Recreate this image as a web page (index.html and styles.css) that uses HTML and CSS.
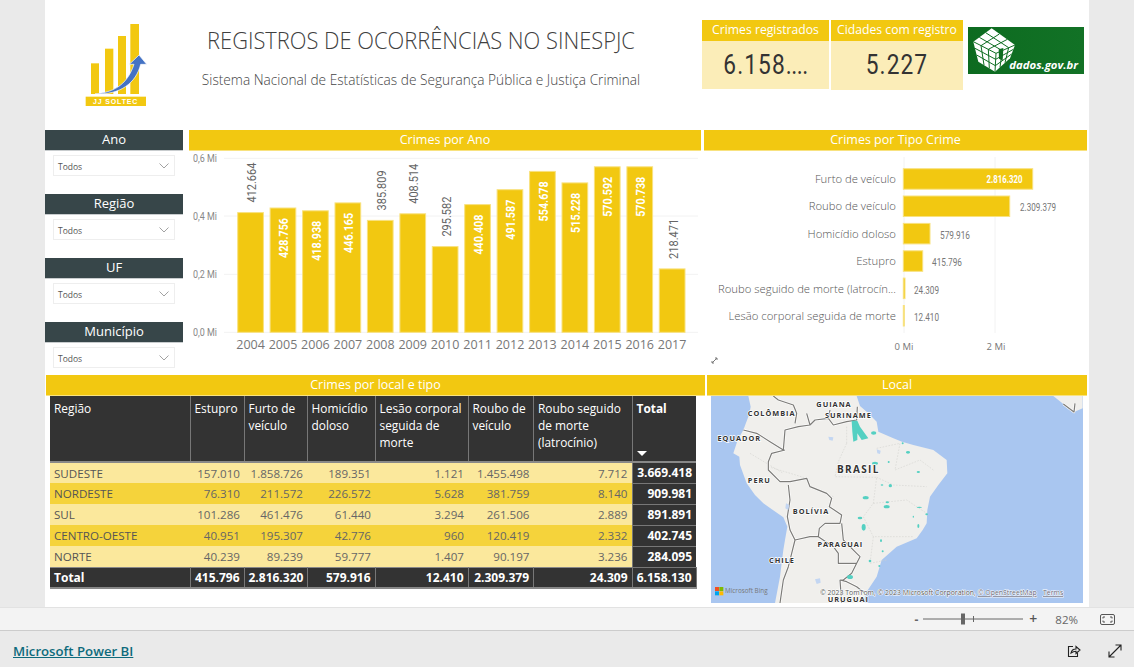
FILE: index.html
```html
<!DOCTYPE html>
<html lang="pt-BR">
<head>
<meta charset="utf-8">
<title>Registros de Ocorrências no SINESPJC</title>
<link rel="stylesheet" href="styles.css">
</head>
<body>
<main class="report">
  <header class="top">
    <svg class="logo" viewBox="0 0 270 300" aria-label="JJ Soltec">
      <rect class="lg-bar" x="63" y="145" width="24" height="92"/>
      <rect class="lg-bar" x="105" y="101" width="25" height="136"/>
      <rect class="lg-bar" x="144" y="63" width="24" height="174"/>
      <rect class="lg-bar" x="181" y="27" width="26" height="210"/>
      <path class="lg-arrow" d="M75 237C125 232 170 215 192 148H178L207 120L230 148H212C198 205 150 240 75 237Z"/>
      <rect class="lg-bar" x="47" y="245" width="181" height="28"/>
      <text class="lg-text" x="137" y="266">JJ SOLTEC</text>
    </svg>
    <div class="titles">
      <h1 class="title">REGISTROS DE OCORRÊNCIAS NO SINESPJC</h1>
      <p class="subtitle">Sistema Nacional de Estatísticas de Segurança Pública e Justiça Criminal</p>
    </div>
    <section class="kpi kpi-a">
      <h2 class="kpi-head">Crimes registrados</h2>
      <div class="kpi-value">6.158<span class="dots">....</span></div>
    </section>
    <section class="kpi kpi-b">
      <h2 class="kpi-head">Cidades com registro</h2>
      <div class="kpi-value">5.227</div>
    </section>
    <svg class="dados" viewBox="24 21 348 141" aria-label="dados.gov.br">
      <defs>
        <linearGradient id="dg" x1="0" y1="0" x2="1" y2="0">
          <stop offset="0" stop-color="#0d6b20"/><stop offset="1" stop-color="#127226"/>
        </linearGradient>
      </defs>
      <rect x="24" y="21" width="348" height="141" fill="url(#dg)"/>
      <polygon class="cube" points="95,25 165,75 150,115 105,155 55,125 40,65"/>
      <path class="cube-line" d="M118 42L63 77M142 58L85 88M77 38L146 83M58 52L127 92M63 77L72 135M85 88L88 145M45 85L107 118M50 105L106 137M40 65L108 100L165 75M108 100L105 155M127 92L120 142M146 83L135 128M107 118L160 88M106 137L155 102"/>
      <polygon class="cube-notch" points="116,88 130,84 128,122 117,116"/>
      <text class="dados-text" x="148" y="146">dados.gov.br</text>
    </svg>
  </header>

  <div class="middle">
    <aside class="slicers">
      <div class="slicer"><h3 class="slicer-head">Ano</h3><div class="select"><span>Todos</span><svg class="chev" viewBox="0 0 10 6"><path d="M.5.5L5 5L9.5.5"/></svg></div></div>
      <div class="slicer"><h3 class="slicer-head">Região</h3><div class="select"><span>Todos</span><svg class="chev" viewBox="0 0 10 6"><path d="M.5.5L5 5L9.5.5"/></svg></div></div>
      <div class="slicer"><h3 class="slicer-head">UF</h3><div class="select"><span>Todos</span><svg class="chev" viewBox="0 0 10 6"><path d="M.5.5L5 5L9.5.5"/></svg></div></div>
      <div class="slicer"><h3 class="slicer-head">Município</h3><div class="select"><span>Todos</span><svg class="chev" viewBox="0 0 10 6"><path d="M.5.5L5 5L9.5.5"/></svg></div></div>
    </aside>

    <section class="panel panel-year">
      <h2 class="bar-title">Crimes por Ano</h2>
      <svg class="chart" viewBox="189 151 512 224">
        <path class="grid" d="M224 158.3H698M224 216H698M224 274.3H698M224 332.3H698"/>
        <text class="axis-y" x="193" y="162" textLength="24" lengthAdjust="spacingAndGlyphs">0,6 Mi</text>
        <text class="axis-y" x="193" y="220" textLength="24" lengthAdjust="spacingAndGlyphs">0,4 Mi</text>
        <text class="axis-y" x="193" y="278" textLength="24" lengthAdjust="spacingAndGlyphs">0,2 Mi</text>
        <text class="axis-y" x="193" y="336" textLength="24" lengthAdjust="spacingAndGlyphs">0,0 Mi</text>
        <g class="bars">
          <rect x="237.7" y="212.6" width="25.7" height="119.7"/>
          <rect x="270.1" y="208" width="25.7" height="124.3"/>
          <rect x="302.6" y="210.8" width="25.7" height="121.5"/>
          <rect x="335" y="202.9" width="25.7" height="129.4"/>
          <rect x="367.4" y="220.4" width="25.7" height="111.9"/>
          <rect x="399.9" y="213.8" width="25.7" height="118.5"/>
          <rect x="432.3" y="246.6" width="25.7" height="85.7"/>
          <rect x="464.7" y="204.6" width="25.7" height="127.7"/>
          <rect x="497.1" y="189.7" width="25.7" height="142.6"/>
          <rect x="529.6" y="171.4" width="25.7" height="160.9"/>
          <rect x="562" y="182.9" width="25.7" height="149.4"/>
          <rect x="594.4" y="166.8" width="25.7" height="165.5"/>
          <rect x="626.9" y="166.8" width="25.7" height="165.5"/>
          <rect x="659.3" y="268.9" width="25.7" height="63.4"/>
        </g>
        <g class="lbl-out">
          <text transform="translate(256 202.6) rotate(-90)" textLength="40" lengthAdjust="spacingAndGlyphs">412.664</text>
          <text transform="translate(385.7 210.4) rotate(-90)" textLength="40" lengthAdjust="spacingAndGlyphs">385.809</text>
          <text transform="translate(418.2 203.8) rotate(-90)" textLength="40" lengthAdjust="spacingAndGlyphs">408.514</text>
          <text transform="translate(450.6 236.6) rotate(-90)" textLength="40" lengthAdjust="spacingAndGlyphs">295.582</text>
          <text transform="translate(677.6 258.9) rotate(-90)" textLength="40" lengthAdjust="spacingAndGlyphs">218.471</text>
        </g>
        <g class="lbl-in">
          <text transform="translate(288 218) rotate(-90)" textLength="40" lengthAdjust="spacingAndGlyphs">428.756</text>
          <text transform="translate(320.5 220.8) rotate(-90)" textLength="40" lengthAdjust="spacingAndGlyphs">418.938</text>
          <text transform="translate(353 212.9) rotate(-90)" textLength="40" lengthAdjust="spacingAndGlyphs">446.165</text>
          <text transform="translate(482.6 214.6) rotate(-90)" textLength="40" lengthAdjust="spacingAndGlyphs">440.408</text>
          <text transform="translate(515 199.7) rotate(-90)" textLength="40" lengthAdjust="spacingAndGlyphs">491.587</text>
          <text transform="translate(547.5 181.4) rotate(-90)" textLength="40" lengthAdjust="spacingAndGlyphs">554.678</text>
          <text transform="translate(580 192.9) rotate(-90)" textLength="40" lengthAdjust="spacingAndGlyphs">515.228</text>
          <text transform="translate(612.3 176.8) rotate(-90)" textLength="40" lengthAdjust="spacingAndGlyphs">570.592</text>
          <text transform="translate(644.8 176.8) rotate(-90)" textLength="40" lengthAdjust="spacingAndGlyphs">570.738</text>
        </g>
        <g class="axis-x">
          <text x="250.6" y="349">2004</text><text x="283" y="349">2005</text><text x="315.4" y="349">2006</text><text x="347.9" y="349">2007</text><text x="380.3" y="349">2008</text><text x="412.7" y="349">2009</text><text x="445.1" y="349">2010</text><text x="477.6" y="349">2011</text><text x="510" y="349">2012</text><text x="542.4" y="349">2013</text><text x="574.9" y="349">2014</text><text x="607.3" y="349">2015</text><text x="639.7" y="349">2016</text><text x="672.1" y="349">2017</text>
        </g>
      </svg>
    </section>

    <section class="panel panel-type">
      <h2 class="bar-title">Crimes por Tipo Crime</h2>
      <svg class="chart" viewBox="704 151 383 224">
        <path class="grid" d="M904 157V333M995 157V333"/>
        <g class="bars">
          <rect x="903.3" y="168.7" width="129.4" height="20.5"/>
          <rect x="903.3" y="196" width="106.4" height="20.5"/>
          <rect x="903.3" y="223.4" width="26.7" height="20.5"/>
          <rect x="903.3" y="250.8" width="19.4" height="20.5"/>
          <rect x="903.3" y="278.1" width="1.7" height="20.5"/>
          <rect x="903.3" y="305.5" width="1" height="20.5"/>
        </g>
        <g class="cat">
          <text x="896" y="183">Furto de veículo</text>
          <text x="896" y="210">Roubo de veículo</text>
          <text x="896" y="238">Homicídio doloso</text>
          <text x="896" y="265">Estupro</text>
          <text x="896" y="293">Roubo seguido de morte (latrocín...</text>
          <text x="896" y="320">Lesão corporal seguida de morte</text>
        </g>
        <text class="val val-in" x="986.5" y="183" textLength="36" lengthAdjust="spacingAndGlyphs">2.816.320</text>
        <g class="val">
          <text x="1020" y="210.5" textLength="36" lengthAdjust="spacingAndGlyphs">2.309.379</text>
          <text x="940" y="238.5" textLength="30" lengthAdjust="spacingAndGlyphs">579.916</text>
          <text x="932" y="265.5" textLength="30" lengthAdjust="spacingAndGlyphs">415.796</text>
          <text x="914" y="293.5" textLength="25" lengthAdjust="spacingAndGlyphs">24.309</text>
          <text x="914" y="320.5" textLength="25" lengthAdjust="spacingAndGlyphs">12.410</text>
        </g>
        <g class="axis-h">
          <text x="904" y="349.5">0 Mi</text>
          <text x="996" y="349.5">2 Mi</text>
        </g>
        <path class="resize" d="M712.5 362.5L716.5 358.5M712 361V363H714M715 358H717V360"/>
      </svg>
    </section>
  </div>

  <div class="bottom">
    <section class="panel panel-table">
      <h2 class="bar-title">Crimes por local e tipo</h2>
      <table class="matrix">
        <colgroup>
          <col class="c1"><col class="c2"><col class="c3"><col class="c4"><col class="c5"><col class="c6"><col class="c7"><col class="c8">
        </colgroup>
        <thead>
          <tr>
            <th>Região</th><th>Estupro</th><th>Furto de veículo</th><th>Homicídio doloso</th><th>Lesão corporal seguida de morte</th><th>Roubo de veículo</th><th>Roubo seguido de morte (latrocínio)</th><th class="th-total">Total<span class="sort"></span></th>
          </tr>
        </thead>
        <tbody>
          <tr><td>SUDESTE</td><td>157.010</td><td>1.858.726</td><td>189.351</td><td>1.121</td><td>1.455.498</td><td>7.712</td><td>3.669.418</td></tr>
          <tr><td>NORDESTE</td><td>76.310</td><td>211.572</td><td>226.572</td><td>5.628</td><td>381.759</td><td>8.140</td><td>909.981</td></tr>
          <tr><td>SUL</td><td>101.286</td><td>461.476</td><td>61.440</td><td>3.294</td><td>261.506</td><td>2.889</td><td>891.891</td></tr>
          <tr><td>CENTRO-OESTE</td><td>40.951</td><td>195.307</td><td>42.776</td><td>960</td><td>120.419</td><td>2.332</td><td>402.745</td></tr>
          <tr><td>NORTE</td><td>40.239</td><td>89.239</td><td>59.777</td><td>1.407</td><td>90.197</td><td>3.236</td><td>284.095</td></tr>
        </tbody>
        <tfoot>
          <tr><td>Total</td><td>415.796</td><td>2.816.320</td><td>579.916</td><td>12.410</td><td>2.309.379</td><td>24.309</td><td>6.158.130</td></tr>
        </tfoot>
      </table>
    </section>

    <section class="panel panel-map">
      <h2 class="bar-title">Local</h2>
      <svg class="map" viewBox="33 18 1116 621" aria-label="Mapa">
        <rect class="ocean" x="33" y="18" width="1116" height="621"/>
        <path class="land" d="M1060 18L1090 42L1122 66L1148 55V18Z"/>
        <path class="land" d="M145 18L152 50L148 72L130 120L113 150L100 190L118 200L120 225L140 280L165 315L190 340L250 382L262 410L255 450L250 480L245 520L240 560L225 639H490L500 605L530 560L545 510L590 470L650 445L668 420L680 400L682 360L690 320L715 285L742 250L740 210L700 180L640 165L606 155L580 145L535 125L530 95L505 70L480 48L470 18Z"/>
        <path class="state" d="M440 160L415 215L405 260L530 262L520 340L490 380M530 262L580 285L680 290M530 175L600 160L585 240L660 210L700 240M520 340L620 330L680 370M490 380L520 440L640 440M520 440L510 520L560 510M205 230L320 265M440 110L440 160M150 190L250 250M330 290L400 320"/>
        <path class="border-h" d="M220 18L235 30L280 45L290 70L285 100M130 120L170 130L210 155L250 180L255 120L295 110L330 105L345 90L385 85L400 105L440 95L470 90L472 50M330 105L320 70M385 85L390 60M255 180L215 190L205 215L205 240L240 275L270 275L320 265L330 290L380 310L395 325L388 350L425 375L420 400L375 400L358 415L355 440L400 470L415 490L415 520L470 520L480 500L470 490L430 450L425 400M265 285L270 330L262 380L270 420L285 450L330 440L355 440M285 450L275 490L265 530L250 570L240 639M470 520L455 550L430 570L420 570L425 639M420 570L440 575L470 590L495 610M1090 42L1122 66L1125 40"/>
        <path class="border" d="M220 18L235 30L280 45L290 70L285 100M130 120L170 130L210 155L250 180L255 120L295 110L330 105L345 90L385 85L400 105L440 95L470 90L472 50M330 105L320 70M385 85L390 60M255 180L215 190L205 215L205 240L240 275L270 275L320 265L330 290L380 310L395 325L388 350L425 375L420 400L375 400L358 415L355 440L400 470L415 490L415 520L470 520L480 500L470 490L430 450L425 400M265 285L270 330L262 380L270 420L285 450L330 440L355 440M285 450L275 490L265 530L250 570L240 639M470 520L455 550L430 570L420 570L425 639M420 570L440 575L470 590L495 610M1090 42L1122 66L1125 40"/>
        <g class="teal">
          <polygon points="455,92 472,92 480,110 505,145 485,150 472,130 472,150 460,155 457,125"/>
          <ellipse cx="521" cy="129" rx="8" ry="5"/><ellipse cx="525" cy="220" rx="9" ry="5"/><ellipse cx="624" cy="187" rx="6" ry="4"/>
          <ellipse cx="497" cy="323" rx="9" ry="5"/><ellipse cx="560" cy="350" rx="9" ry="5"/><ellipse cx="562" cy="337" rx="5" ry="3"/>
          <ellipse cx="571" cy="287" rx="5" ry="5"/><ellipse cx="546" cy="285" rx="4" ry="2"/><ellipse cx="480" cy="384" rx="7" ry="4"/>
          <ellipse cx="491" cy="412" rx="6" ry="10"/><ellipse cx="450" cy="561" rx="9" ry="6"/><ellipse cx="510" cy="513" rx="4" ry="4"/>
          <ellipse cx="655" cy="246" rx="5" ry="3"/><ellipse cx="680" cy="373" rx="4" ry="3"/><ellipse cx="658" cy="352" rx="8" ry="2"/>
          <ellipse cx="655" cy="408" rx="3" ry="6"/><ellipse cx="640" cy="380" rx="2" ry="3"/><ellipse cx="543" cy="452" rx="3" ry="4"/>
          <ellipse cx="608" cy="160" rx="3" ry="3"/><ellipse cx="566" cy="216" rx="3" ry="3"/><ellipse cx="548" cy="484" rx="3" ry="3"/><ellipse cx="538" cy="528" rx="3" ry="3"/>
        </g>
        <path class="lake" d="M385 140L400 142L398 152L388 150ZM530 178L542 182L540 192L532 190ZM345 568L360 565L362 578L350 582ZM258 340L268 345L265 360L256 355Z"/>
        <g class="place">
          <text x="402" y="50">GUIANA</text>
          <text x="215" y="79">COLÔMBIA</text>
          <text x="445" y="84">SURINAME</text>
          <text x="118" y="153">EQUADOR</text>
          <text x="178" y="279">PERU</text>
          <text x="333" y="372">BOLÍVIA</text>
          <text x="421" y="471">PARAGUAI</text>
          <text x="246" y="519">CHILE</text>
          <text x="445" y="637">URUGUAI</text>
          <text class="place-big" x="475" y="250">BRASIL</text>
        </g>
        <rect class="ms-r" x="45" y="591" width="12" height="12"/>
        <rect class="ms-g" x="58" y="591" width="12" height="12"/>
        <rect class="ms-b" x="45" y="604" width="12" height="12"/>
        <rect class="ms-y" x="58" y="604" width="12" height="12"/>
        <text class="bing" x="75" y="610">Microsoft Bing</text>
        <text class="copy" x="360" y="616">© 2023 TomTom, © 2023 Microsoft Corporation, <tspan class="copy-link">© OpenStreetMap</tspan></text>
        <text class="copy copy-link" x="1029" y="616">Terms</text>
      </svg>
    </section>
  </div>
</main>

<div class="zoombar">
  <span class="zb-minus">-</span>
  <svg class="slider" viewBox="0 0 100 12">
    <path class="sl-line" d="M0 6H100M50.5 3V9"/>
    <rect class="sl-thumb" x="38" y="0.5" width="4" height="11"/>
  </svg>
  <span class="zb-plus">+</span>
  <span class="zb-pct">82%</span>
  <svg class="fit" viewBox="0 0 15 11">
    <rect class="ic" x=".5" y=".5" width="14" height="10" rx="1.5"/>
    <path class="ic" d="M3 4.5V3H5M10 3H12V4.5M12 6.5V8H10M5 8H3V6.5"/>
  </svg>
</div>

<footer class="footbar">
  <a class="pbi" href="#">Microsoft Power BI</a>
  <div class="foot-icons">
    <svg class="fi" viewBox="0 0 14 14">
      <path class="ic-dark" d="M6 2.5H1.5V12.5H10.5V9"/>
      <path class="ic-dark" d="M4 9C4.5 6.5 6.5 5 9 5V2.5L13 6L9 9.5V7.2C7 7.2 5.5 7.8 4 9Z"/>
    </svg>
    <svg class="fi" viewBox="0 0 14 14">
      <path class="ic-dark" d="M1 13L13 1M7.5 1H13V6.5M1 7.5V13H6.5"/>
    </svg>
  </div>
</footer>
</body>
</html>
```
FILE: styles.css
```css
* { box-sizing: border-box; }
html, body { margin: 0; padding: 0; }
body {
  width: 1134px;
  height: 667px;
  overflow: hidden;
  background: #eaeaea;
  font-family: "Open Sans", "Noto Sans", sans-serif;
  color: #444;
}
h1, h2, h3, p { margin: 0; font-weight: 400; }

.report {
  width: 1044px;
  height: 607px;
  margin-left: 45px;
  background: #fff;
}

/* header */
.top { display: flex; align-items: flex-start; height: 130px; }
.logo { width: 90px; height: 100px; margin: 15px 0 0 25px; flex: none; }
.lg-bar { fill: #f2c811; }
.lg-arrow { fill: #4472c4; stroke: #fff; stroke-width: 2; }
.lg-text { fill: #fff; font: 700 21px "Liberation Sans", sans-serif; letter-spacing: 2.5px; text-anchor: middle; }
.titles { width: 464px; margin: 26px 49px 0 29px; flex: none; text-align: center; }
.title { font-size: 23.5px; font-weight: 300; color: #404040; line-height: 28px; white-space: nowrap; transform: scaleX(.93); }
.subtitle { margin-top: 17px; font-size: 14px; font-weight: 300; color: #444; line-height: 18px; white-space: nowrap; transform: scaleX(.977); }
.kpi { flex: none; margin-top: 20px; background: #fbedb8; }
.kpi-a { width: 127px; height: 69px; margin-right: 2px; }
.kpi-b { width: 132px; height: 70px; margin-right: 5px; }
.kpi-head { height: 21px; background: #f2c811; color: #fff; font-size: 12.2px; line-height: 20px; text-align: center; white-space: nowrap; }
.kpi-value { font-family: Roboto, sans-serif; font-size: 27px; letter-spacing: 1.3px; color: #333; text-align: center; line-height: 49px; transform: scaleX(.84); white-space: nowrap; }
.dots { letter-spacing: -.6px; }
.dados { width: 116px; height: 47px; margin-top: 27px; flex: none; }
.cube { fill: #fff; }
.cube-line { fill: none; stroke: #0f6e22; stroke-width: 3; }
.cube-notch { fill: #0f6e22; }
.dados-text { fill: #fff; font: italic 700 34px "Open Sans", sans-serif; }

/* middle */
.middle { display: flex; height: 245px; }
.slicers { width: 138px; margin-right: 6px; flex: none; display: flex; flex-direction: column; gap: 18px; }
.slicer { height: 46px; }
.slicer-head { height: 21px; background: #374649; border-bottom: 1px solid #c8ccce; color: #fff; font-size: 13px; line-height: 19px; text-align: center; }
.select { display: flex; justify-content: space-between; align-items: center; width: 122px; height: 21px; margin: 4px 0 0 8px; padding: 1px 4px 0; border: 1px solid #eee; font-size: 8.5px; color: #555; }
.chev { width: 10px; height: 6px; margin-right: 1px; }
.chev path { fill: none; stroke: #8a8a8a; stroke-width: .8; }

.panel { flex: none; display: flex; flex-direction: column; }
.panel-year { width: 512px; margin-right: 3px; }
.panel-type { width: 383px; }
.bar-title { height: 21px; flex: none; background: #f2c811; border-bottom: 1px solid #f8e27f; color: #fff; font-size: 12.5px; line-height: 19px; text-align: center; }
.chart { width: 100%; height: 224px; display: block; }
.grid { fill: none; stroke: #f2f2f2; stroke-width: 1; }
.bars rect { fill: #f2c811; stroke: #f8e27f; stroke-width: 1; }
.axis-y { font: 10.5px Roboto, sans-serif; fill: #888; }
.lbl-out text, .lbl-in text { font: 13px Roboto, sans-serif; }
.lbl-out text { fill: #666; }
.lbl-in text { fill: #fff; font-weight: 700; text-anchor: end; }
.axis-x text { font-size: 12.5px; fill: #777; text-anchor: middle; }
.cat text { font-size: 11.3px; font-weight: 300; fill: #555; text-anchor: end; }
.val text, .val { font: 10px Roboto, sans-serif; fill: #777; }
.val-in { fill: #fff; font-weight: 700; }
.axis-h text { font-size: 9.5px; fill: #777; text-anchor: middle; }
.resize { fill: none; stroke: #555; stroke-width: .8; }

/* bottom */
.bottom { display: flex; height: 228px; padding-left: 1px; }
.panel-table { width: 659px; margin-right: 2px; }
.panel-map { width: 380px; }
.matrix { width: 646px; margin-left: 4px; border-collapse: collapse; table-layout: fixed; font-size: 11.6px; }
.c1 { width: 140px; } .c2 { width: 54px; } .c3 { width: 63px; } .c4 { width: 68px; }
.c5 { width: 93px; } .c6 { width: 65.5px; } .c7 { width: 98.5px; } .c8 { width: 64px; }
.matrix th {
  height: 66px; padding: 4px 4px 0; vertical-align: top; text-align: left;
  background: #333; color: #fff; font-size: 11.9px; font-weight: 400; line-height: 17px;
  border-right: 1px solid #777; border-bottom: 2px solid #888;
}
.matrix th:last-child { border-right: 0; }
.matrix .th-total { font-weight: 700; position: relative; }
.sort { position: absolute; left: 4px; bottom: 5px; width: 0; height: 0; border: 5px solid transparent; border-top-color: #fff; border-bottom-width: 0; }
.matrix td { height: 21px; padding: 0 4px; text-align: right; line-height: 17px; color: #666; white-space: nowrap; }
.matrix td:first-child { text-align: left; color: #555; }
.matrix tbody tr:nth-child(odd) td { background: #fbe89c; }
.matrix tbody tr:nth-child(even) td { background: #f5d33b; }
.matrix tbody tr td:last-child { background: #333; color: #fff; font-size: 12px; font-weight: 700; border-bottom: 1px solid #777; border-left: 1px solid #777; }
.matrix tfoot td, .matrix tfoot td:first-child { background: #333; color: #fff; font-size: 12px; font-weight: 700; border-top: 1px solid #888; border-right: 1px solid #777; border-bottom: 2px solid #888; }

.map { width: 372px; height: 207px; margin-left: 4px; display: block; }
.ocean { fill: #a9c6f0; }
.land { fill: #f0efec; }
.border-h { fill: none; stroke: #fff; stroke-width: 7; stroke-linejoin: round; }
.border { fill: none; stroke: #7d7c79; stroke-width: 3.6; stroke-linejoin: round; }
.state { fill: none; stroke: #cfcfcc; stroke-width: 1.6; stroke-dasharray: 5 4; }
.teal { fill: #54d0c2; }
.lake { fill: #c3d6f2; }
.place text { font-size: 22px; font-weight: 700; letter-spacing: 3px; fill: #333; text-anchor: middle; paint-order: stroke; stroke: #fff; stroke-width: 4px; }
.place .place-big { font-size: 30px; letter-spacing: 4px; }
.ms-r { fill: #f25022; } .ms-g { fill: #7fba00; } .ms-b { fill: #00a4ef; } .ms-y { fill: #ffb900; }
.bing { font-size: 19px; fill: #777; }
.copy { font-size: 20.8px; fill: #555; paint-order: stroke; stroke: #fff; stroke-width: 3px; }
.copy-link { text-decoration: underline; fill: #667; }

/* viewer bars */
.zoombar {
  display: flex; align-items: center; justify-content: flex-end;
  height: 24px; padding-right: 19px;
  background: #f3f3f3; border-top: 1px solid #e2e2e2; border-bottom: 1px solid #ccc;
  font-size: 12px; color: #666;
}
.zb-minus { font-weight: 700; margin-right: 5px; }
.slider { width: 100px; height: 12px; }
.sl-line { fill: none; stroke: #666; stroke-width: 1; }
.sl-thumb { fill: #666; }
.zb-plus { margin: 0 18px 0 6px; font-size: 14px; line-height: 14px; font-weight: 600; color: #555; }
.zb-pct { margin-right: 22px; font-size: 11.5px; }
.fit { width: 15px; height: 11px; }
.ic { fill: none; stroke: #555; stroke-width: 1; }
.footbar { display: flex; align-items: center; justify-content: space-between; height: 36px; padding: 4px 12px 0 13px; }
.pbi { color: #0e6a7c; font-size: 13.2px; font-weight: 600; text-decoration: underline; }
.foot-icons { display: flex; gap: 27px; }
.fi { width: 14px; height: 14px; }
.ic-dark { fill: none; stroke: #222; stroke-width: 1.1; }
```
